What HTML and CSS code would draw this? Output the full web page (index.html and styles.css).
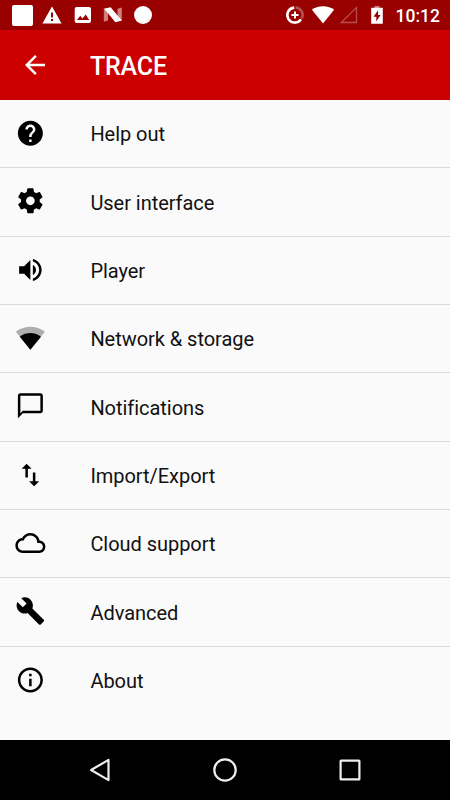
FILE: index.html
```html
<!DOCTYPE html>
<html lang="en">
<head>
<meta charset="utf-8">
<title>Settings</title>
<link rel="stylesheet" href="styles.css">
</head>
<body>
<div class="screen">
  <div class="status">
    <div class="status-left">
      <span class="tile"></span>
      <svg class="warn" viewBox="0 0 20 18"><path d="M10 .5L19.6 17.5H.4z"/><path class="cut" d="M9 6.500h2v5H9zM9 13h2v2H9z"/></svg>
      <svg class="photo" viewBox="0 0 18 18"><rect x=".7" y=".9" width="16.300" height="16.200" rx="2"/><path class="cut" d="M3 14l3.200-4.200 2.300 2.800 3.200-4.200L15.300 14z"/></svg>
      <svg class="nougat" viewBox="0 0 20 16"><path class="dim" d="M.8 1.800L5 .8v12.800l-4.200 1.200zM14.500 1.800l4.300-1.200v12.800l-4.300 1.200z"/><path d="M1.200 1.700L7.600.2 18.800 13.500l-6.400 1.700z"/></svg>
      <span class="dot"></span>
    </div>
    <div class="status-right">
      <svg class="saver" viewBox="0 0 20 20"><g fill="none" stroke="#fff"><path class="dim-line" stroke-width="2.600" d="M10.500 2.600A7.400 7.400 0 0 1 16.800 13.300"/><path stroke-width="2.600" d="M9.200 2.600A7.500 7.500 0 1 0 16 14.300"/><path stroke-width="2" d="M10 6.400v7.200M6.400 10h7.200"/></g></svg>
      <svg class="wifi" viewBox="0 0 24 18"><path d="M12 17.500L.9 3.800C3.600 1.600 7.500.3 12 .3s8.400 1.300 11.100 3.500z"/></svg>
      <svg class="signal" viewBox="0 0 20 18"><path class="signal-line" d="M2.200 16.500H17.500V1.600z"/></svg>
      <svg class="battery" viewBox="0 0 12 18"><path class="dim" d="M3.500 0h5v2h-5z"/><rect x=".2" y="1.800" width="11.600" height="16" rx=".5"/><path class="cut" d="M7 4.300L2.500 10.700H5.300V15.500L9.500 9H7z"/></svg>
      <span class="clock">10:12</span>
    </div>
  </div>
  <header class="bar">
    <svg class="back" viewBox="0 0 24 24"><path d="M20 11H7.830l5.590-5.590L12 4l-8 8 8 8 1.410-1.410L7.830 13H20v-2z"/></svg>
    <h1>TRACE</h1>
  </header>
  <ul class="list">
    <li><svg viewBox="-.3 -.2 24 24"><path d="M12 2C6.480 2 2 6.480 2 12s4.480 10 10 10 10-4.480 10-10S17.520 2 12 2zm1 17h-2v-2h2v2zm2.070-7.750l-.9.920C13.450 12.900 13 13.500 13 15h-2v-.5c0-1.100.450-2.100 1.170-2.830l1.240-1.260c.370-.360.590-.860.590-1.410 0-1.100-.9-2-2-2s-2 .9-2 2H8c0-2.210 1.790-4 4-4s4 1.790 4 4c0 .880-.360 1.680-.930 2.250z"/></svg><span>Help out</span></li>
    <li><svg viewBox="-.3 .2 24 24"><path d="M19.430 12.980c.040-.320.070-.640.070-.980s-.030-.660-.070-.980l2.110-1.650c.190-.150.240-.420.120-.640l-2-3.460c-.120-.220-.390-.300-.610-.220l-2.490 1c-.520-.400-1.080-.730-1.690-.980l-.380-2.650C14.460 2.180 14.250 2 14 2h-4c-.250 0-.460.180-.490.420l-.380 2.650c-.610.250-1.170.590-1.690.980l-2.490-1c-.230-.090-.490 0-.610.220l-2 3.460c-.130.220-.070.490.120.640l2.110 1.650c-.040.320-.070.650-.070.980s.030.660.070.980l-2.110 1.650c-.190.150-.240.420-.120.640l2 3.460c.120.220.390.300.610.220l2.490-1c.520.400 1.080.730 1.690.980l.380 2.650c.030.240.240.420.490.420h4c.250 0 .460-.180.490-.420l.380-2.650c.610-.250 1.170-.590 1.690-.980l2.490 1c.230.090.490 0 .610-.220l2-3.460c.120-.220.070-.490-.120-.640l-2.110-1.650zM12 15.500c-1.930 0-3.500-1.570-3.500-3.500s1.570-3.500 3.500-3.500 3.500 1.570 3.500 3.500-1.570 3.500-3.500 3.500z"/></svg><span>User interface</span></li>
    <li><svg viewBox="-.3 0 24 24"><path d="M3 9v6h4l5 5V4L7 9H3zm13.500 3c0-1.770-1.020-3.290-2.500-4.030v8.050c1.480-.730 2.500-2.250 2.500-4.020zM14 3.230v2.060c2.890.860 5 3.540 5 6.710s-2.110 5.850-5 6.710v2.060c4.010-.910 7-4.490 7-8.770s-2.990-7.860-7-8.770z"/></svg><span>Player</span></li>
    <li><svg viewBox="-.3 0 24 24"><path class="faint" d="M12.010 21.490L23.640 7c-.450-.340-4.930-4-11.640-4C5.280 3 .810 6.660.360 7l11.630 14.490.010.010.010-.010z"/><path d="M3.530 10.950l8.460 10.540.010.010.010-.010 8.460-10.540C20.040 10.620 16.810 8 12 8c-4.810 0-8.040 2.620-8.470 2.950z"/></svg><span>Network &amp; storage</span></li>
    <li><svg viewBox="-.3 .2 24 24"><path d="M20 2H4c-1.100 0-2 .9-2 2v18l4-4h14c1.100 0 2-.9 2-2V4c0-1.100-.9-2-2-2zm0 14H6l-2 2V4h16v12z"/></svg><span>Notifications</span></li>
    <li><svg viewBox="-.3 0 24 24"><path d="M9 3L5 6.990h3V14h2V6.990h3L9 3zm7 14.010V10h-2v7.010h-3L15 21l4-3.990h-3z"/></svg><span>Import/Export</span></li>
    <li><svg viewBox="-.3 0 24 24"><path d="M19.350 10.040C18.670 6.590 15.640 4 12 4 9.110 4 6.600 5.640 5.350 8.040 2.340 8.360 0 10.910 0 14c0 3.310 2.690 6 6 6h13c2.760 0 5-2.240 5-5 0-2.640-2.050-4.780-4.650-4.960zM19 18H6c-2.210 0-4-1.790-4-4s1.790-4 4-4h.710C7.370 7.690 9.480 6 12 6c3.040 0 5.500 2.460 5.500 5.500v.5H19c1.660 0 3 1.340 3 3s-1.340 3-3 3z"/></svg><span>Cloud support</span></li>
    <li><svg viewBox="-.3 0 24 24"><path d="M22.700 19l-9.100-9.100c.9-2.300.4-5-1.500-6.900-2-2-5-2.400-7.400-1.300L9 6 6 9 1.600 4.700C.4 7.100.9 10.100 2.900 12.100c1.900 1.900 4.600 2.400 6.900 1.500l9.100 9.100c.4.4 1 .4 1.400 0l2.300-2.300c.5-.4.5-1.100.1-1.400z"/></svg><span>Advanced</span></li>
    <li><svg viewBox="-.3 0 24 24"><path d="M11 17h2v-6h-2v6zm1-15C6.480 2 2 6.480 2 12s4.480 10 10 10 10-4.480 10-10S17.520 2 12 2zm0 18c-4.410 0-8-3.590-8-8s3.590-8 8-8 8 3.590 8 8-3.590 8-8 8zM11 9h2V7h-2v2z"/></svg><span>About</span></li>
  </ul>
  <nav class="nav">
    <svg viewBox="0 0 30 30"><path d="M19 4.900V25.100L1.600 15z" transform="translate(4.500)"/></svg>
    <svg viewBox="0 0 30 30"><circle cx="15" cy="15" r="10.700"/></svg>
    <svg viewBox="0 0 30 30"><rect x="5.600" y="5.600" width="18.800" height="18.800" rx=".5"/></svg>
  </nav>
</div>
</body>
</html>
```

FILE: styles.css
```css
* { box-sizing: border-box; }
body { margin: 0; font-family: Roboto, "Liberation Sans", sans-serif; }
svg { display: block; flex: none; overflow: visible; }
.screen {
  width: 450px;
  height: 800px;
  display: flex;
  flex-direction: column;
  background: #fafafa;
  overflow: hidden;
}
.status {
  height: 30px;
  flex: none;
  display: flex;
  justify-content: space-between;
  align-items: center;
  padding: 0 10px 0 12px;
  background: #990000;
  color: #fff;
}
.status svg { fill: #fff; }
.status .cut { fill: #990000; }
.status .dim { fill-opacity: .5; }
.status .dim-line { stroke-opacity: .3; }
.status-left, .status-right { display: flex; align-items: center; }
.tile { width: 21px; height: 21px; border-radius: 2px; background: #fff; }
.warn { width: 20px; height: 18px; margin-left: 9px; }
.photo { width: 18px; height: 18px; margin-left: 12px; }
.nougat { width: 20px; height: 16px; margin-left: 11px; }
.dot { width: 18px; height: 18px; margin-left: 11px; border-radius: 50%; background: #fff; }
.saver { width: 20px; height: 20px; }
.wifi { width: 24px; height: 18px; margin-left: 6px; }
.signal { width: 20px; height: 18px; margin-left: 4px; }
.status .signal-line { fill: none; stroke: #fff; stroke-opacity: .3; stroke-width: 1.3; }
.battery { width: 12px; height: 18px; margin-left: 12px; }
.clock { width: 45px; margin-left: 12px; font-size: 17.5px; font-weight: 500; line-height: 30px; text-align: right; padding-top: 1px; }
.bar {
  height: 70px;
  flex: none;
  display: flex;
  align-items: center;
  padding-left: 20px;
  background: #cc0000;
  color: #fff;
}
.back { width: 30px; height: 30px; fill: #fff; }
.bar h1 { margin: 3px 0 0 40px; font-size: 25px; font-weight: 500; line-height: 30px; letter-spacing: -.2px; }
.list { flex: 1; margin: 0; padding: 0; list-style: none; }
.list li {
  height: 68.33px;
  display: flex;
  align-items: center;
  padding-left: 15.4px;
  border-bottom: 1px solid #d9d9d9;
  color: #111;
  font-size: 20px;
  line-height: 24px;
  letter-spacing: -.04px;
}
.list li:last-child { border-bottom: 0; }
.list svg { width: 30px; height: 30px; margin-top: -1px; fill: #000; }
.list .faint { fill-opacity: .3; }
.list span { margin: 1.4px 0 0 45px; }
.nav {
  height: 60px;
  flex: none;
  display: flex;
  justify-content: center;
  align-items: center;
  gap: 95px;
  background: #000;
}
.nav svg { width: 30px; height: 30px; fill: none; stroke: #eee; stroke-width: 2.2; stroke-linejoin: round; }
```
